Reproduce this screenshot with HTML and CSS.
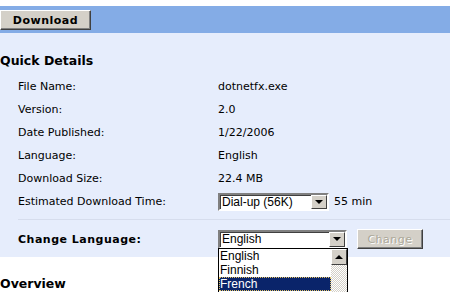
FILE: index.html
```html
<!DOCTYPE html>
<html lang="en">
<head>
    <meta charset="UTF-8">
    <title>Download details</title>
    <link rel="stylesheet" href="styles.css">
</head>
<body>

<div class="toolbar">
    <button class="btn btn-download">Download</button>
</div>

<div class="details">
    <h2>Quick Details</h2>
    <div class="info">
        <div class="label">File Name:</div><div class="value">dotnetfx.exe</div>
        <div class="label">Version:</div><div class="value">2.0</div>
        <div class="label">Date Published:</div><div class="value">1/22/2006</div>
        <div class="label">Language:</div><div class="value">English</div>
        <div class="label">Download Size:</div><div class="value">22.4 MB</div>
        <div class="label">Estimated Download Time:</div>
        <div class="value">
            <div class="combo combo-speed"><span class="combo-text">Dial-up (56K)</span><span class="combo-arrow"></span></div>
            <span class="minutes">55 min</span>
        </div>
    </div>
    <div class="change-row">
        <div class="label strong">Change Language:</div>
        <div class="value">
            <div class="combo combo-lang"><span class="combo-text">English</span><span class="combo-arrow"></span></div>
            <button class="btn btn-change" disabled>Change</button>
            <div class="droplist">
                <ul>
                    <li>English</li>
                    <li>Finnish</li>
                    <li class="selected">French</li>
                </ul>
                <div class="scroll"><span class="scroll-up"></span></div>
            </div>
        </div>
    </div>
</div>

<h2 class="overview">Overview</h2>

</body>
</html>
```

FILE: styles.css
```css
body { margin: 0; font-family: "DejaVu Sans", Verdana, sans-serif; font-size: 11px; color: #000; background: #fff; overflow: hidden; }
h2 { font-size: 12.5px; font-weight: bold; margin: 0; line-height: 16px; }

.toolbar { margin-top: 6px; height: 27px; background-color: #84ace6; padding-top: 4px; box-sizing: border-box; }
.btn { font-family: "DejaVu Sans", Verdana, sans-serif; font-size: 11px; font-weight: bold; background-color: #d4d0c8; border: 1px solid; border-color: #fff #404040 #404040 #fff; box-shadow: inset -1px -1px 0 #808080; padding: 0; cursor: pointer; }
.btn-download { width: 91px; height: 20px; letter-spacing: 0.5px; }

.details { background-color: #e6edfc; padding: 20px 0 0 0; height: 224px; box-sizing: border-box; }
.info { display: grid; grid-template-columns: 218px 1fr; grid-auto-rows: 23px; margin-top: 6px; }
.label { padding-left: 18px; display: flex; align-items: center; }
.value { display: flex; align-items: center; }
.strong { font-weight: bold; letter-spacing: 0.5px; }
.minutes { margin-left: 5px; }

.combo { display: flex; background: #fff; border: 2px solid; border-color: #808080 #fff #fff #808080; box-shadow: inset 1px 1px 0 #404040; box-sizing: border-box; font-family: "Liberation Sans", Arial, sans-serif; font-size: 12px; }
.combo-text { flex: 1; padding: 0 0 0 2px; display: flex; align-items: center; }
.combo-arrow { width: 16px; background: #d4d0c8; border: 1px solid; border-color: #fff #404040 #404040 #fff; box-sizing: border-box; position: relative; }
.combo-arrow::after { content: ""; position: absolute; left: 3px; top: 50%; margin-top: -2px; border-left: 4px solid transparent; border-right: 4px solid transparent; border-top: 4px solid #000; }
.combo-speed { width: 111px; height: 18px; }
.combo-lang { width: 129px; height: 19px; }

.change-row { display: grid; grid-template-columns: 200px 1fr; margin-top: 6px; border-top: 1px solid #d6dded; margin-left: 18px; padding: 9px 0; }
.change-row .label { padding-left: 0; }
.change-row .value { position: relative; }
.btn-change { width: 66px; height: 20px; margin-left: 10px; font-weight: normal; color: #aca899; text-shadow: 1px 1px 0 #fff; letter-spacing: 0.5px; }

.droplist { position: absolute; left: 0; top: 19px; width: 130px; height: 60px; border: 1px solid #000; background: #fff; display: flex; box-sizing: border-box; font-family: "Liberation Sans", Arial, sans-serif; font-size: 12px; }
.droplist ul { list-style: none; margin: 0; padding: 0; flex: 1; }
.droplist li { height: 14px; line-height: 14px; padding-left: 1px; }
.droplist li.selected { background: #0a246a; color: #fff; outline: 1px dotted #e0c060; outline-offset: -1px; }
.scroll { width: 16px; background-color: #fff; background-image: repeating-conic-gradient(#d4d0c8 0 25%, #fff 0 50%); background-size: 2px 2px; }
.scroll-up { display: block; height: 16px; background: #d4d0c8; border: 1px solid; border-color: #fff #404040 #404040 #fff; box-sizing: border-box; position: relative; }
.scroll-up::after { content: ""; position: absolute; left: 3px; top: 5px; border-left: 4px solid transparent; border-right: 4px solid transparent; border-bottom: 4px solid #000; }

.overview { margin-top: 19px; }
```
